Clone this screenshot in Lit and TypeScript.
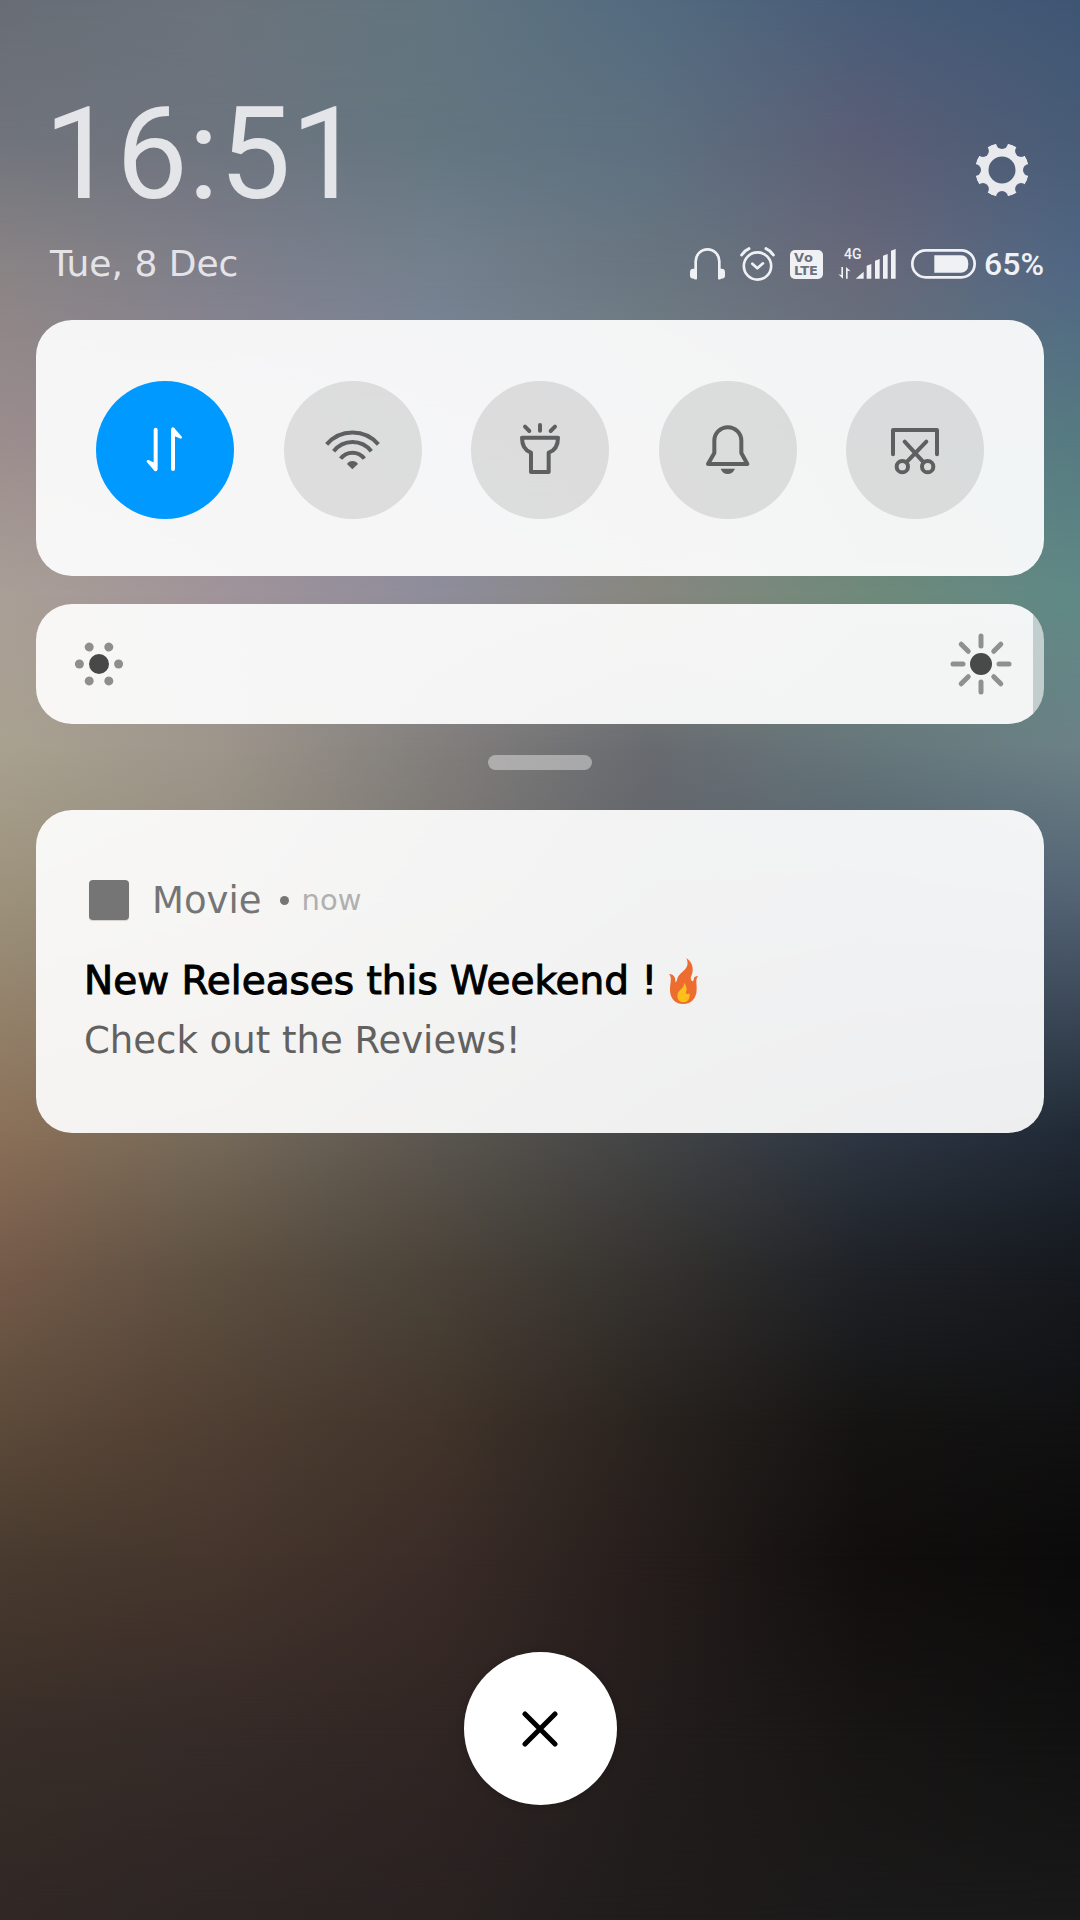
import { LitElement, html, svg, css } from "lit";
import { customElement, state } from "lit/decorators.js";

interface Shade {
  at: number;
  colors: string[];
}

// Wallpaper colours, row by row from top to bottom, each spread evenly from left to right.
const WALLPAPER: Shade[] = [
  { at: 0, colors: ["#686d76", "#6b737c", "#62757f", "#546b7f", "#485c78", "#3e5674"] },
  { at: 7, colors: ["#70737c", "#6d747e", "#637680", "#5d7080", "#5a5e76", "#485c77"] },
  { at: 14, colors: ["#8a8485", "#7f7f8b", "#74808e", "#697680", "#68697a", "#506784"] },
  { at: 22, colors: ["#9a8b8c", "#918b97", "#80879c", "#7a8388", "#66787e", "#557982"] },
  { at: 31, colors: ["#aa9f96", "#a1949a", "#8f8d9b", "#88877f", "#6f8a7a", "#5f8986"] },
  { at: 39, colors: ["#a9a190", "#9d968b", "#837f7c", "#686b70", "#66777b", "#6b8186"] },
  { at: 47, colors: ["#9c917a", "#91897b", "#78746f", "#5e6167", "#505c6b", "#526274"] },
  { at: 59, colors: ["#8b7058", "#766a5a", "#5c5750", "#434546", "#2d3642", "#202a36"] },
  { at: 66, colors: ["#755b4a", "#5e5142", "#4b443a", "#363330", "#1f2227", "#16191e"] },
  { at: 74, colors: ["#5d4b3a", "#503f33", "#42352b", "#29231f", "#151413", "#111112"] },
  { at: 81, colors: ["#493b2f", "#46362d", "#3b2d28", "#261e1c", "#110e0d", "#0c0b0b"] },
  { at: 90, colors: ["#392e28", "#362b28", "#312624", "#231d1c", "#171514", "#111111"] },
  { at: 100, colors: ["#302825", "#2c2524", "#292221", "#1f1c1b", "#1b1a1a", "#191919"] },
];

@customElement("wallpaper-layer")
class WallpaperLayer extends LitElement {
  static styles = css`
    :host {
      position: absolute;
      inset: 0;
      overflow: hidden;
    }
    .shade {
      position: absolute;
      inset: 0;
    }
  `;

  render() {
    return WALLPAPER.map((row, i) => {
      const fill = `background:linear-gradient(90deg,${row.colors.join(",")});`;
      const fade = i
        ? `mask-image:linear-gradient(180deg,transparent ${WALLPAPER[i - 1].at}%,#000 ${row.at}%)`
        : "";
      return html`<div class="shade" style=${fill + fade}></div>`;
    });
  }
}

interface Tile {
  name: string;
  icon: unknown;
}

const TILES: Tile[] = [
  {
    name: "Mobile data",
    icon: svg`
      <g>
        <path d="M-28-61V57" stroke-width="12"/>
        <path d="M-28 60L-51 34L-28 44Z" fill="currentColor" stroke-width="8"/>
      </g>
      <g transform="rotate(180 -2 -2)">
        <path d="M-28-61V57" stroke-width="12"/>
        <path d="M-28 60L-51 34L-28 44Z" fill="currentColor" stroke-width="8"/>
      </g>`,
  },
  {
    name: "Wi-Fi",
    icon: svg`
      <g stroke-linecap="butt">
        <path d="M-79-17A102 102 0 0 1 76-17"/>
        <path d="M-58 4A71 71 0 0 1 55 4"/>
        <path d="M-37 26A44 44 0 0 1 34 26"/>
      </g>
      <path d="M-18 42Q-13 33-2 33Q10 33 15 42L-2 58Z" fill="currentColor" stroke="none"/>`,
  },
  {
    name: "Flashlight",
    icon: svg`
      <path d="M0-75V-58M-45-70L-32-57M45-70L32-57"/>
      <path d="M-54-37H54Q54-2 26 8V66H-27V8Q-54-2-54-37Z"/>`,
  },
  {
    name: "Ringer",
    icon: svg`
      <path d="M-41 9V-28A40.500 40.500 0 0 1 40-28V9L58 42H-60Z"/>
      <path d="M-22 56H21Q14 72-1 72Q-16 72-22 56Z" fill="currentColor" stroke="none"/>`,
  },
  {
    name: "Screenshot",
    icon: svg`
      <path d="M-66 13V-60H66V13"/>
      <path d="M-31-25L26 37M34-25L-26 37"/>
      <circle cx="-38" cy="50" r="17"/>
      <circle cx="38" cy="50" r="17"/>`,
  },
];

@customElement("app-root")
class AppRoot extends LitElement {
  @state() private active = new Set<string>(["Mobile data"]);
  @state() private brightness = 989;

  static styles = css`
    :host {
      display: block;
    }
    * {
      box-sizing: border-box;
    }
    button {
      border: 0;
      padding: 0;
      background: none;
      cursor: pointer;
    }
    svg {
      display: block;
      flex: none;
    }
    .shade-panel {
      position: relative;
      isolation: isolate;
      min-height: 100vh;
      display: flex;
      flex-direction: column;
      padding: 92px 36px 115px;
      font-family: "DejaVu Sans", sans-serif;
      color: #e4e6ea;
    }
    wallpaper-layer {
      z-index: -1;
    }
    .top {
      display: flex;
      justify-content: space-between;
      align-items: flex-end;
      padding-left: 8px;
    }
    .clock {
      font: 400 128px/124px Roboto, sans-serif;
      color: #e3e5e8;
    }
    .settings {
      width: 84px;
      height: 92px;
      display: grid;
      place-items: center;
      color: #e9eaee;
    }
    .status {
      display: flex;
      justify-content: space-between;
      align-items: center;
      height: 40px;
      margin: 28px 0 36px;
      padding-left: 14px;
    }
    .date {
      font-size: 36px;
      line-height: 40px;
      color: #e4e4e8;
    }
    .indicators {
      display: flex;
      align-items: center;
      gap: 15px;
      color: #eff1f5;
    }
    .battery {
      display: flex;
      align-items: center;
      gap: 8px;
      font: 500 32px/40px Roboto, sans-serif;
    }
    .card {
      border-radius: 36px;
      background: rgba(255, 255, 255, 0.92);
    }
    .tiles {
      display: flex;
      justify-content: space-between;
      padding: 61px 60px 57px;
    }
    .tile {
      width: 138px;
      height: 138px;
      border-radius: 50%;
      display: grid;
      place-items: center;
      background: rgba(0, 0, 0, 0.1);
      color: #5d5f60;
    }
    .tile.on {
      background: #0099ff;
      color: #fff;
    }
    .brightness {
      position: relative;
      display: block;
      height: 120px;
      margin-top: 28px;
      border-radius: 36px;
      overflow: hidden;
    }
    .range {
      appearance: none;
      display: block;
      width: 100%;
      height: 100%;
      margin: 0;
      cursor: pointer;
    }
    .range::-webkit-slider-thumb {
      appearance: none;
      width: 1px;
      height: 120px;
    }
    .low,
    .high {
      position: absolute;
      top: 28px;
      pointer-events: none;
    }
    .low {
      left: 31px;
    }
    .high {
      right: 31px;
    }
    .handle {
      align-self: center;
      width: 104px;
      height: 15px;
      margin: 31px 0 40px;
      border-radius: 8px;
      background: rgba(255, 255, 255, 0.4);
    }
    .notice {
      padding: 66px 48px 62px;
    }
    .source {
      display: flex;
      align-items: center;
      height: 48px;
      margin-bottom: 27px;
      color: #757575;
    }
    .app-icon {
      width: 40px;
      height: 40px;
      margin: 0 23px 0 5px;
      border-radius: 4px;
      background: #757575;
      box-shadow: 0 1px 1px rgba(0, 0, 0, 0.15);
    }
    .app-name {
      font-size: 37px;
    }
    .dot {
      width: 9px;
      height: 9px;
      margin: 0 13px 0 18px;
      border-radius: 50%;
      background: #757575;
    }
    .when {
      font-size: 29px;
      color: #b0b0b0;
    }
    .title,
    .body {
      margin: 0;
      font-weight: 400;
      line-height: 60px;
    }
    .title {
      display: flex;
      align-items: center;
      gap: 12px;
      font-size: 39px;
      color: #000;
      -webkit-text-stroke: 1px #000;
    }
    .body {
      font-size: 37px;
      color: #616161;
    }
    .close {
      align-self: center;
      width: 153px;
      height: 153px;
      margin-top: auto;
      border-radius: 50%;
      display: grid;
      place-items: center;
      background: #fff;
      color: #000;
      box-shadow: 0 1px 8px rgba(0, 0, 0, 0.2);
    }
  `;

  private toggle(name: string) {
    const next = new Set(this.active);
    if (!next.delete(name)) next.add(name);
    this.active = next;
  }

  private gear() {
    return svg`<svg width="54" height="54" viewBox="-27 -27 54 54" aria-hidden="true">
      <mask id="teeth">
        <circle r="27" fill="#fff"/>
        <circle r="13.500" fill="#000"/>
        ${[0, 45, 90, 135, 180, 225, 270, 315].map(
          (a) => svg`<circle cx="27" r="6" fill="#000" transform="rotate(${a})"/>`
        )}
      </mask>
      <circle r="27" fill="currentColor" mask="url(#teeth)"/>
    </svg>`;
  }

  private indicators() {
    return html`
      <svg width="35" height="32" viewBox="0 0 105 96" role="img" aria-label="Headphones">
        <path d="M17 76V40A35.500 36 0 0 1 88 40V76" fill="none" stroke="currentColor" stroke-width="8"/>
        <path d="M21 62V93Q17 97 12 92Q0 92 0 83V72Q0 62 10 62ZM84 62V93Q88 97 93 92Q105 92 105 83V72Q105 62 95 62Z" fill="currentColor"/>
      </svg>
      <svg width="35" height="34" viewBox="0 0 105 102" role="img" aria-label="Alarm">
        <g fill="none" stroke="currentColor" stroke-width="8" stroke-linecap="round" stroke-linejoin="round">
          <circle cx="52.500" cy="57" r="41"/>
          <path d="M37 50L52 64L69 49"/>
          <path d="M5 24Q13 11 27 5M78 5Q92 11 100 24" stroke-width="9"/>
        </g>
      </svg>
      <svg width="33" height="30" viewBox="0 0 33 30" role="img" aria-label="VoLTE">
        <rect width="33" height="29" y="1" rx="5" fill="currentColor"/>
        <g font-family="DejaVu Sans, sans-serif" font-weight="700" font-size="13" fill="#6b707b">
          <text x="4" y="13">V</text>
          <text x="14" y="13">o</text>
          <text x="4" y="26">LTE</text>
        </g>
      </svg>
      <svg width="58" height="40" viewBox="0 -12 174 120" role="img" aria-label="Signal">
        <text x="18" y="34" font-family="Roboto, sans-serif" font-weight="500" font-size="42" fill="currentColor">4G</text>
        <g fill="currentColor">
          <path d="M53 92L77 71V92ZM86 53L100 48V92H86ZM111 38L125 33V92H111ZM135 23L149 18V92H135ZM159 8L173 3V92H159Z"/>
          <path d="M10 57H15V92L1 79L10 81ZM24 92V57L38 70L29 68V92Z"/>
        </g>
      </svg>
      <span class="battery">
        <svg width="65" height="30" viewBox="0 0 195 90" role="img" aria-label="Battery">
          <rect x="4" y="4" width="187" height="81" rx="40" fill="none" stroke="currentColor" stroke-width="8"/>
          <path d="M70 19H150Q172 19 172 45Q172 71 150 71H70Z" fill="currentColor"/>
        </svg>
        65%
      </span>
    `;
  }

  private flame() {
    return svg`<svg width="30" height="46" viewBox="0 0 90 138" role="img" aria-label="Fire">
      <path d="M52 0C76 16 74 42 65 58C66 66 68 70 71 70C78 66 69 54 88 54C78 62 84 77 83 95C82 122 66 138 43 138C20 138 4 122 3 98C2 78 11 60 0 48C17 49 20 60 19 73C25 71 23 64 27 57C36 39 66 33 52 0Z" fill="#ed6c30"/>
      <path d="M45 74C51 82 56 92 51 101C49 107 57 111 61 106C63 115 62 132 43 133C29 132 23 121 26 108C29 95 46 91 45 74Z" fill="#fdbf1c"/>
    </svg>`;
  }

  render() {
    const filled = this.brightness / 10;
    const track = `background:linear-gradient(90deg,rgba(255,255,255,.92) ${filled}%,rgba(255,255,255,.6) ${filled}%)`;
    return html`
      <main class="shade-panel">
        <wallpaper-layer></wallpaper-layer>
        <header>
          <div class="top">
            <time class="clock">16:51</time>
            <button class="settings" aria-label="Settings">${this.gear()}</button>
          </div>
          <div class="status">
            <span class="date">Tue, 8 Dec</span>
            <div class="indicators">${this.indicators()}</div>
          </div>
        </header>

        <section class="card tiles">
          ${TILES.map(
            (t) => html`<button
              class="tile ${this.active.has(t.name) ? "on" : ""}"
              aria-label=${t.name}
              aria-pressed=${this.active.has(t.name)}
              @click=${() => this.toggle(t.name)}
            >
              <svg width="60" height="60" viewBox="-90 -90 180 180" fill="none" stroke="currentColor" stroke-width="12" stroke-linecap="round" stroke-linejoin="round">
                ${t.icon}
              </svg>
            </button>`
          )}
        </section>

        <label class="brightness">
          <input
            class="range"
            type="range"
            min="0"
            max="1000"
            aria-label="Brightness"
            style=${track}
            .value=${String(this.brightness)}
            @input=${(e: Event) => (this.brightness = Number((e.target as HTMLInputElement).value))}
          />
          <svg class="low" width="64" height="64" viewBox="-32 -32 64 64" aria-hidden="true">
            <circle r="10" fill="#484848"/>
            ${[0, 60, 120, 180, 240, 300].map(
              (a) => svg`<circle cx="19.600" r="4.500" fill="#8e8e8e" transform="rotate(${a})"/>`
            )}
          </svg>
          <svg class="high" width="64" height="64" viewBox="-32 -32 64 64" aria-hidden="true">
            <circle r="11" fill="#484a49"/>
            ${[0, 45, 90, 135, 180, 225, 270, 315].map(
              (a) => svg`<path d="M18 0H28" stroke="#8f9190" stroke-width="5" stroke-linecap="round" transform="rotate(${a})"/>`
            )}
          </svg>
        </label>

        <div class="handle"></div>

        <article class="card notice">
          <div class="source">
            <span class="app-icon"></span>
            <span class="app-name">Movie</span>
            <span class="dot"></span>
            <span class="when">now</span>
          </div>
          <h2 class="title"><span>New Releases this Weekend !</span>${this.flame()}</h2>
          <p class="body">Check out the Reviews!</p>
        </article>

        <button class="close" aria-label="Close">
          <svg width="36" height="36" viewBox="-18 -18 36 36" stroke="currentColor" stroke-width="5" stroke-linecap="round">
            <path d="M-15-15L15 15M15-15L-15 15"/>
          </svg>
        </button>
      </main>
    `;
  }
}
